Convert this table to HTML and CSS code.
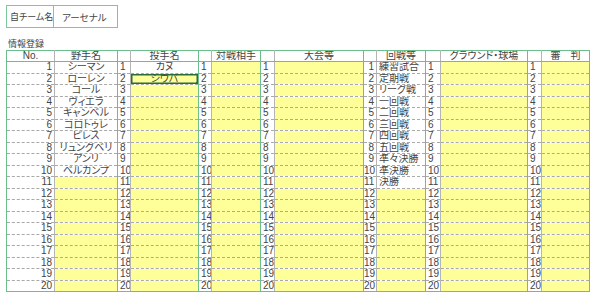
FILE: index.html
```html
<!DOCTYPE html>
<html lang="ja">
<head>
<meta charset="utf-8">
<link rel="stylesheet" href="styles.css">
</head>
<body>
<div class="page">
  <div class="team">
    <div class="team-label">自チーム名</div>
    <div class="team-name">アーセナル</div>
  </div>
  <div class="caption">情報登録</div>
  <table class="sheet">
    <colgroup>
      <col class="w-no"><col class="w-fielder"><col class="w-n"><col class="w-pitcher"><col class="w-n"><col class="w-opp"><col class="w-n2"><col class="w-meet"><col class="w-n"><col class="w-round"><col class="w-n3"><col class="w-ground"><col class="w-n2"><col class="w-ump">
    </colgroup>
    <thead>
      <tr>
        <th class="g">No.</th><th class="gr">野手名</th><th></th><th class="gr">投手名</th><th></th><th class="gr">対戦相手</th><th></th><th class="gr">大会等</th><th></th><th class="gr">回戦等</th><th></th><th class="gr">グラウンド・球場</th><th></th><th class="gr">審　判</th>
      </tr>
    </thead>
    <tbody>
      <tr><td class="r">1</td><td class="c gr">シーマン</td><td class="n">1</td><td class="c gr">カヌ</td><td class="n">1</td><td class="y gr"></td><td class="n">1</td><td class="y gr"></td><td class="r">1</td><td class="l gr">練習試合</td><td class="n">1</td><td class="y gr"></td><td class="n">1</td><td class="y gr"></td></tr>
      <tr><td class="r">2</td><td class="c gr">ローレン</td><td class="n">2</td><td class="c y gr sel">シウバ</td><td class="n">2</td><td class="y gr"></td><td class="n">2</td><td class="y gr"></td><td class="r">2</td><td class="l gr">定期戦</td><td class="n">2</td><td class="y gr"></td><td class="n">2</td><td class="y gr"></td></tr>
      <tr><td class="r">3</td><td class="c gr">コール</td><td class="n">3</td><td class="y gr"></td><td class="n">3</td><td class="y gr"></td><td class="n">3</td><td class="y gr"></td><td class="r">3</td><td class="l gr">リーグ戦</td><td class="n">3</td><td class="y gr"></td><td class="n">3</td><td class="y gr"></td></tr>
      <tr><td class="r">4</td><td class="c gr">ヴィエラ</td><td class="n">4</td><td class="y gr"></td><td class="n">4</td><td class="y gr"></td><td class="n">4</td><td class="y gr"></td><td class="r">4</td><td class="l gr">一回戦</td><td class="n">4</td><td class="y gr"></td><td class="n">4</td><td class="y gr"></td></tr>
      <tr><td class="r">5</td><td class="c gr">キャンベル</td><td class="n">5</td><td class="y gr"></td><td class="n">5</td><td class="y gr"></td><td class="n">5</td><td class="y gr"></td><td class="r">5</td><td class="l gr">二回戦</td><td class="n">5</td><td class="y gr"></td><td class="n">5</td><td class="y gr"></td></tr>
      <tr><td class="r">6</td><td class="c gr">コロトゥレ</td><td class="n">6</td><td class="y gr"></td><td class="n">6</td><td class="y gr"></td><td class="n">6</td><td class="y gr"></td><td class="r">6</td><td class="l gr">三回戦</td><td class="n">6</td><td class="y gr"></td><td class="n">6</td><td class="y gr"></td></tr>
      <tr><td class="r">7</td><td class="c gr">ピレス</td><td class="n">7</td><td class="y gr"></td><td class="n">7</td><td class="y gr"></td><td class="n">7</td><td class="y gr"></td><td class="r">7</td><td class="l gr">四回戦</td><td class="n">7</td><td class="y gr"></td><td class="n">7</td><td class="y gr"></td></tr>
      <tr><td class="r">8</td><td class="c gr">リュングベリ</td><td class="n">8</td><td class="y gr"></td><td class="n">8</td><td class="y gr"></td><td class="n">8</td><td class="y gr"></td><td class="r">8</td><td class="l gr">五回戦</td><td class="n">8</td><td class="y gr"></td><td class="n">8</td><td class="y gr"></td></tr>
      <tr><td class="r">9</td><td class="c gr">アンリ</td><td class="n">9</td><td class="y gr"></td><td class="n">9</td><td class="y gr"></td><td class="n">9</td><td class="y gr"></td><td class="r">9</td><td class="l gr">準々決勝</td><td class="n">9</td><td class="y gr"></td><td class="n">9</td><td class="y gr"></td></tr>
      <tr><td class="r">10</td><td class="c gr">ベルカンプ</td><td class="n">10</td><td class="y gr"></td><td class="n">10</td><td class="y gr"></td><td class="n">10</td><td class="y gr"></td><td class="r">10</td><td class="l gr">準決勝</td><td class="n">10</td><td class="y gr"></td><td class="n">10</td><td class="y gr"></td></tr>
      <tr><td class="r">11</td><td class="y gr"></td><td class="n">11</td><td class="y gr"></td><td class="n">11</td><td class="y gr"></td><td class="n">11</td><td class="y gr"></td><td class="r">11</td><td class="l gr">決勝</td><td class="n">11</td><td class="y gr"></td><td class="n">11</td><td class="y gr"></td></tr>
      <tr><td class="r">12</td><td class="y gr"></td><td class="n">12</td><td class="y gr"></td><td class="n">12</td><td class="y gr"></td><td class="n">12</td><td class="y gr"></td><td class="r">12</td><td class="y gr"></td><td class="n">12</td><td class="y gr"></td><td class="n">12</td><td class="y gr"></td></tr>
      <tr><td class="r">13</td><td class="y gr"></td><td class="n">13</td><td class="y gr"></td><td class="n">13</td><td class="y gr"></td><td class="n">13</td><td class="y gr"></td><td class="r">13</td><td class="y gr"></td><td class="n">13</td><td class="y gr"></td><td class="n">13</td><td class="y gr"></td></tr>
      <tr><td class="r">14</td><td class="y gr"></td><td class="n">14</td><td class="y gr"></td><td class="n">14</td><td class="y gr"></td><td class="n">14</td><td class="y gr"></td><td class="r">14</td><td class="y gr"></td><td class="n">14</td><td class="y gr"></td><td class="n">14</td><td class="y gr"></td></tr>
      <tr><td class="r">15</td><td class="y gr"></td><td class="n">15</td><td class="y gr"></td><td class="n">15</td><td class="y gr"></td><td class="n">15</td><td class="y gr"></td><td class="r">15</td><td class="y gr"></td><td class="n">15</td><td class="y gr"></td><td class="n">15</td><td class="y gr"></td></tr>
      <tr><td class="r">16</td><td class="y gr"></td><td class="n">16</td><td class="y gr"></td><td class="n">16</td><td class="y gr"></td><td class="n">16</td><td class="y gr"></td><td class="r">16</td><td class="y gr"></td><td class="n">16</td><td class="y gr"></td><td class="n">16</td><td class="y gr"></td></tr>
      <tr><td class="r">17</td><td class="y gr"></td><td class="n">17</td><td class="y gr"></td><td class="n">17</td><td class="y gr"></td><td class="n">17</td><td class="y gr"></td><td class="r">17</td><td class="y gr"></td><td class="n">17</td><td class="y gr"></td><td class="n">17</td><td class="y gr"></td></tr>
      <tr><td class="r">18</td><td class="y gr"></td><td class="n">18</td><td class="y gr"></td><td class="n">18</td><td class="y gr"></td><td class="n">18</td><td class="y gr"></td><td class="r">18</td><td class="y gr"></td><td class="n">18</td><td class="y gr"></td><td class="n">18</td><td class="y gr"></td></tr>
      <tr><td class="r">19</td><td class="y gr"></td><td class="n">19</td><td class="y gr"></td><td class="n">19</td><td class="y gr"></td><td class="n">19</td><td class="y gr"></td><td class="r">19</td><td class="y gr"></td><td class="n">19</td><td class="y gr"></td><td class="n">19</td><td class="y gr"></td></tr>
      <tr class="last"><td class="r">20</td><td class="y gr"></td><td class="n">20</td><td class="y gr"></td><td class="n">20</td><td class="y gr"></td><td class="n">20</td><td class="y gr"></td><td class="r">20</td><td class="y gr"></td><td class="n">20</td><td class="y gr"></td><td class="n">20</td><td class="y gr"></td></tr>
    </tbody>
  </table>
</div>
</body>
</html>
```
FILE: styles.css
```css
html, body {
  margin: 0;
  padding: 0;
  background: #ffffff;
}
body {
  font-family: "Liberation Sans", "Noto Sans CJK JP", sans-serif;
  font-size: 10px;
  font-feature-settings: "palt";
  color: #444444;
}
.page {
  padding: 5px 0 0 6px;
}
.team {
  display: flex;
  width: 112px;
  height: 23px;
  border: 1px solid #7cc89a;
  box-sizing: border-box;
  white-space: nowrap;
}
.team-label {
  width: 47px;
  font-size: 9px;
  border-right: 1px solid #7cc89a;
  display: flex;
  align-items: center;
  padding-left: 3px;
  box-sizing: border-box;
}
.team-name {
  flex: 1;
  display: flex;
  align-items: center;
  padding-left: 8px;
  font-size: 9.5px;
}
.caption {
  margin-top: 11px;
  padding-left: 2px;
  font-size: 9px;
  line-height: 11px;
  height: 11px;
}
.sheet {
  border-collapse: collapse;
  table-layout: fixed;
  width: 584px;
}
.w-no { width: 48px; }
.w-fielder { width: 63px; }
.w-n { width: 13px; }
.w-pitcher { width: 68px; }
.w-opp { width: 49px; }
.w-n2 { width: 14px; }
.w-meet { width: 89px; }
.w-round { width: 49px; }
.w-n3 { width: 15px; }
.w-ground { width: 87px; }
.w-ump { width: 48px; }
.sheet th,
.sheet td {
  padding: 0;
  line-height: 10px;
  white-space: nowrap;
  overflow: hidden;
  border-right: 1px solid #b5b5b5;
  border-bottom: 1px dashed #a9a9a9;
}
.sheet th {
  height: 10px;
  font-weight: normal;
  text-align: center;
  border-top: 1px solid #6cbf8c;
  border-bottom: 1px solid #6cbf8c;
}
.sheet tr > :first-child {
  border-left: 1px solid #6cbf8c;
}
.sheet .gr {
  border-right: 1px solid #6cbf8c;
}
.sheet tbody tr {
  height: 11.5px;
}
.sheet tr.last td {
  border-bottom: 1px solid #6cbf8c;
}
.sheet td.r {
  text-align: right;
  padding-right: 2px;
}
.sheet td.n {
  text-align: left;
  padding-left: 2px;
}
.sheet td.c {
  text-align: center;
}
.sheet td.l {
  text-align: left;
  padding-left: 2px;
}
.sheet td.y {
  background: #ffff99;
}
.sheet td.sel {
  position: relative;
  box-shadow: inset 0 0 0 1.5px #2b6b3c;
}
.sheet td.sel::after {
  content: "";
  position: absolute;
  right: -2px;
  bottom: -2px;
  width: 4px;
  height: 4px;
  background: #2b6b3c;
}
```
